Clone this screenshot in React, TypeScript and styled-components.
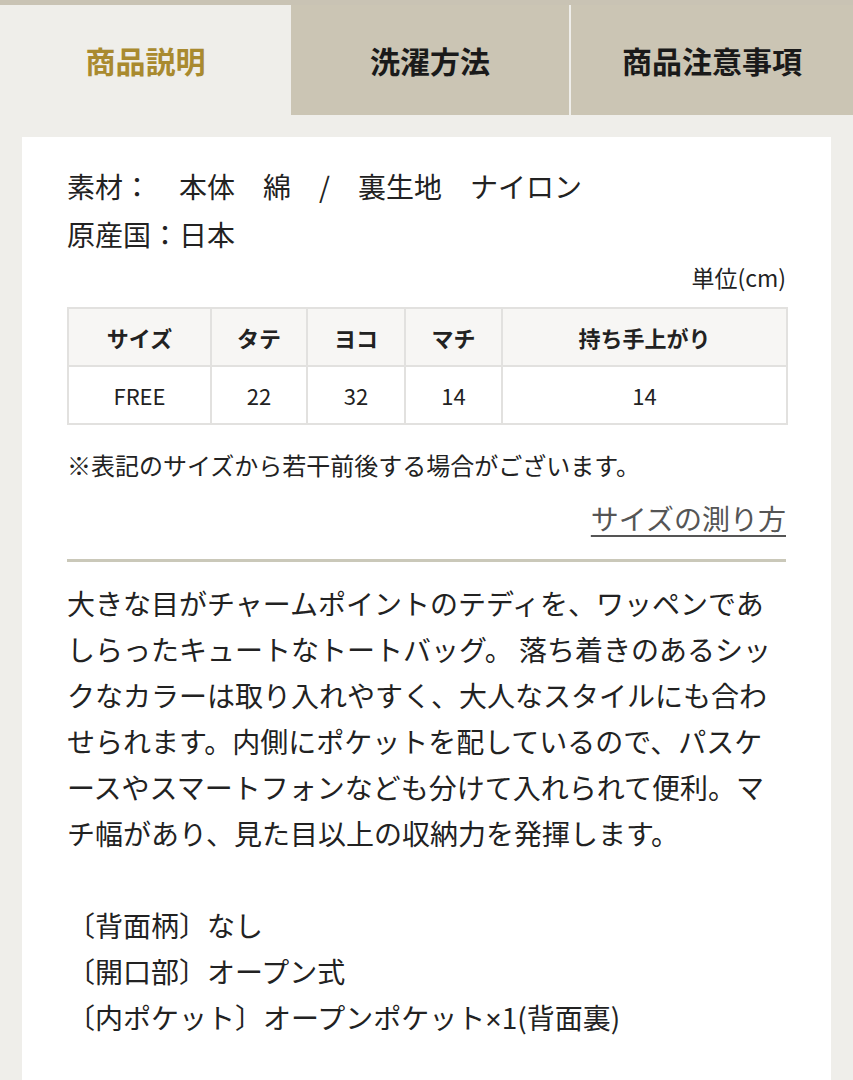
import styled, { createGlobalStyle } from "styled-components";

const GlobalStyle = createGlobalStyle`
  body {
    margin: 0;
    background: #efeeea;
    font-family: "Noto Sans CJK JP", "Noto Sans", sans-serif;
    color: #222;
  }
`;

const Page = styled.div`
  border-top: 5px solid #c9c3b4;
`;

const TabBar = styled.div`
  display: grid;
  grid-template-columns: 291px 280px 282px;
  height: 110px;
`;

const Tab = styled.div<{ $active?: boolean; $divider?: boolean }>`
  display: flex;
  align-items: center;
  justify-content: center;
  font-size: 30px;
  font-weight: 700;
  background: ${(p) => (p.$active ? "#efeeea" : "#cbc5b4")};
  color: ${(p) => (p.$active ? "#a98a2f" : "#1a1a1a")};
  border-right: ${(p) => (p.$divider ? "2px solid #efeeea" : "none")};
`;

const Card = styled.div`
  margin: 22px 22px 0;
  background: #fff;
  padding: 25px 45px 60px;
  min-height: 860px;
`;

const SpecLine = styled.p`
  margin: 0;
  font-size: 28px;
  line-height: 48px;
  white-space: pre;
`;

const Unit = styled.div`
  margin-top: 4px;
  font-size: 23px;
  line-height: 30px;
  text-align: right;
`;

const SizeTable = styled.table`
  width: 100%;
  margin-top: 15px;
  border-collapse: collapse;
  table-layout: fixed;
`;

const Cell = styled.td<{ $head?: boolean }>`
  height: 56px;
  padding: 0;
  border: 2px solid #e2e1df;
  text-align: center;
  font-size: 22px;
  font-weight: ${(p) => (p.$head ? 700 : 400)};
  background: ${(p) => (p.$head ? "#f7f6f4" : "#fff")};
`;

const Note = styled.p`
  margin: 23px 0 0;
  font-size: 24px;
  line-height: 34px;
`;

const LinkRow = styled.div`
  margin-top: 16px;
  text-align: right;
  line-height: 40px;
`;

const SizeLink = styled.a`
  font-size: 28px;
  color: #555;
  text-decoration: underline;
  text-decoration-thickness: 2px;
  text-underline-offset: 5px;
`;

const Rule = styled.hr`
  margin: 16px 0 0;
  border: none;
  height: 3px;
  background: #cac8b9;
`;

const Description = styled.div<{ $gap?: number }>`
  margin-top: ${(p) => p.$gap ?? 18}px;
  font-size: 28px;
  line-height: 46px;
  line-break: loose;
`;

const DetailLine = styled.div`
  font-size: 28px;
  line-height: 46px;
`;

const Times = styled.span`
  font-family: "Liberation Sans", sans-serif;
`;

const cols = [143, 96, 98, 97, 285];
const head = ["サイズ", "タテ", "ヨコ", "マチ", "持ち手上がり"];
const row = ["FREE", "22", "32", "14", "14"];

export default function App() {
  return (
    <Page lang="ja">
      <GlobalStyle />
      <TabBar>
        <Tab $active>商品説明</Tab>
        <Tab $divider>洗濯方法</Tab>
        <Tab>商品注意事項</Tab>
      </TabBar>
      <Card>
        <SpecLine>素材：　本体　綿　/　裏生地　ナイロン</SpecLine>
        <SpecLine>原産国：日本</SpecLine>
        <Unit>単位(cm)</Unit>
        <SizeTable>
          <colgroup>
            {cols.map((w, i) => (
              <col key={i} style={{ width: w }} />
            ))}
          </colgroup>
          <tbody>
            <tr>
              {head.map((h) => (
                <Cell as="th" $head key={h}>
                  {h}
                </Cell>
              ))}
            </tr>
            <tr>
              {row.map((v, i) => (
                <Cell key={i}>{v}</Cell>
              ))}
            </tr>
          </tbody>
        </SizeTable>
        <Note>※表記のサイズから若干前後する場合がございます。</Note>
        <LinkRow>
          <SizeLink href="#">サイズの測り方</SizeLink>
        </LinkRow>
        <Rule />
        <Description>
          大きな目がチャームポイントのテディを、ワッペンであしらったキュートなトートバッグ。
          落ち着きのあるシックなカラーは取り入れやすく、大人なスタイルにも合わせられます。内側にポケットを配しているので、パスケースやスマートフォンなども分けて入れられて便利。マチ幅があり、見た目以上の収納力を発揮します。
        </Description>
        <Description $gap={46}>
          <DetailLine>〔背面柄〕なし</DetailLine>
          <DetailLine>〔開口部〕オープン式</DetailLine>
          <DetailLine>
            〔内ポケット〕オープンポケット<Times>×</Times>1(背面裏)
          </DetailLine>
        </Description>
      </Card>
    </Page>
  );
}
